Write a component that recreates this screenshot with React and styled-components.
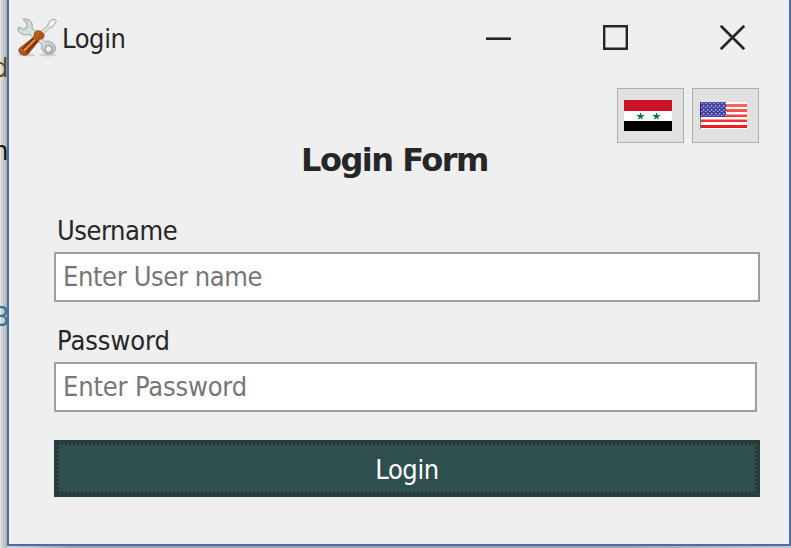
import React from "react";
import styled, { createGlobalStyle } from "styled-components";

const GlobalStyle = createGlobalStyle`
  * { box-sizing: border-box; }
  body { margin: 0; overflow: hidden; }
  button, input { font: inherit; letter-spacing: inherit; border-radius: 0; }
`;

const Desktop = styled.div`
  display: flex;
  width: 791px;
  height: 548px;
  overflow: hidden;
  background: linear-gradient(to right, #d8d8d8, #a6a4a5 70px, #a6a4a5 620px, #c4c4c4);
  color: #262626;
  font: 27px/32px "DejaVu Sans Condensed", "DejaVu Sans", sans-serif;
  font-stretch: condensed;
  letter-spacing: -0.4px;
`;

const Backdrop = styled.div`
  display: flex;
  flex-direction: column;
  align-items: flex-end;
  width: 7px;
  height: 548px;
  padding-top: 52px;
  overflow: hidden;
  background: linear-gradient(to right, #e5e5e5 0 1px, #d2d2d2 1px 3px, #c6c6c6 3px 5px, #b4b4b4 5px);
`;

const Fragment = styled.span`
  flex: none;
  height: 32px;
  margin-bottom: ${(p) => p.$gap}px;
  margin-right: ${(p) => p.$cut}px;
  color: ${(p) => p.$color};
`;

const Window = styled.main`
  display: flex;
  flex-direction: column;
  width: 784px;
  height: 546px;
  border: solid #4a6ea3;
  border-width: 0 2px 2px;
  background: #efefef;
`;

const TitleBar = styled.header`
  display: flex;
  align-items: center;
  height: 76px;
  padding-left: 8px;
`;

const Caption = styled.span`
  flex: 1;
  padding: 2px 0 0 4px;
`;

const WindowButton = styled.button`
  display: grid;
  place-items: center;
  width: 117px;
  height: 76px;
  padding: 0 0 2px 4px;
  border: 0;
  background: none;
  color: inherit;
`;

const Languages = styled.div`
  display: flex;
  justify-content: flex-end;
  gap: 8px;
  padding: 12px 30px 0 0;
`;

const FlagButton = styled.button`
  display: grid;
  place-items: start;
  width: 67px;
  height: 55px;
  padding: 11px 0 0 6px;
  border: 1px solid #adadad;
  background: #e1e1e1;
`;

const Heading = styled.h1`
  height: 40px;
  margin: -3px 0 0;
  padding-right: 9px;
  font-family: "DejaVu Sans", sans-serif;
  font-stretch: normal;
  font-size: 32px;
  line-height: 40px;
  font-weight: bold;
  letter-spacing: -1.5px;
  text-align: center;
`;

const Form = styled.form`
  display: flex;
  flex-direction: column;
  width: 706px;
  margin: 35px 0 0 45px;
`;

const Label = styled.label`
  height: 37px;
  padding-left: 3px;
  letter-spacing: ${(p) => p.$tracking}px;
`;

const Input = styled.input`
  width: ${(p) => p.$width}px;
  height: 50px;
  margin-bottom: ${(p) => p.$gap}px;
  padding: 0 7px 2px;
  border: 2px solid #a0a0a0;
  outline: none;
  background: #fff;
  letter-spacing: ${(p) => p.$tracking}px;
  &::placeholder { color: #767676; opacity: 1; }
`;

const Submit = styled.button`
  height: 57px;
  padding: 3px;
  border: 0;
  background: #243d3d;
  color: #fff;
`;

const FocusFrame = styled.span`
  display: flex;
  align-items: center;
  justify-content: center;
  height: 51px;
  padding-top: 2px;
  --dash: #2a2d2e 0 2px, #2f4f4f 2px 4px;
  background:
    repeating-linear-gradient(90deg, var(--dash)) 0 0 / 100% 2px no-repeat,
    repeating-linear-gradient(90deg, var(--dash)) 0 100% / 100% 2px no-repeat,
    repeating-linear-gradient(var(--dash)) 0 0 / 2px 100% no-repeat,
    repeating-linear-gradient(var(--dash)) 100% 0 / 2px 100% no-repeat,
    #2f4f4f;
`;

function ToolsIcon() {
  return (
    <svg width="41" height="40" viewBox="0 0 41 40">
      <defs>
        <linearGradient id="wood" x1="0" y1="0" x2="1" y2="1">
          <stop offset="0" stopColor="#e28b4a" />
          <stop offset="0.5" stopColor="#b95617" />
          <stop offset="1" stopColor="#74300c" />
        </linearGradient>
        <linearGradient id="steel" x1="0" y1="0" x2="1" y2="1">
          <stop offset="0" stopColor="#c0cdca" />
          <stop offset="0.5" stopColor="#e2e9e7" />
          <stop offset="1" stopColor="#b1bfbc" />
        </linearGradient>
      </defs>
      <ellipse cx="9" cy="37" rx="9" ry="1.5" fill="#cfcfcf" />
      <ellipse cx="31" cy="37" rx="9" ry="1.5" fill="#cfcfcf" />
      <path
        d="M6 1.2C11 0 15.500 3 15.200 8l-.3 2L28 23.500c5-1.300 10.500 2 10.500 7-.2 5.500-7 7.500-11 4.200-2.800-2.300-3.200-5.200-2.700-8.200L12 16C7 18.500 1 15.500.8 9.800l2.400-.6 2.800 2.200 3.800-1.400.2-4z"
        fill="url(#steel)" stroke="#97a5a2"
      />
      <circle cx="31.500" cy="31" r="3.400" fill="#efefef" stroke="#93a29e" strokeWidth="1.300" />
      <path d="M22 15L30.500 8c.8-3.800 3-6.300 6.800-6.800 1.700 0 2.400 1.300 1.500 3-1.500 3.300-3.500 5.300-6.500 6.100L24.500 18z" fill="#dde8e6" stroke="#9baaa6" />
      <path d="M33.500 7l3.500-3.500" stroke="#fff" strokeWidth="2" />
      <path d="M17.500 16c0-3 3.500-4 5.700-2.700 2.500 1 4.800 3.500 3.500 5.800-1 1.600-2.700 1.700-4 2.400L11 36C7.500 39.500-.5 34.500 2.500 30.500L17 19z" fill="url(#wood)" stroke="#903f0d" />
      <path d="M5.500 31L16.500 20.500M9.500 34.500L20.500 22.500" fill="none" stroke="#6e2c09" strokeWidth="1.300" />
      <path d="M7 32.500L18 21.500" stroke="#eda064" strokeWidth="1.300" />
    </svg>
  );
}

const starPath = "M0-4L1-1.200L4-1.200L1.600.6L2.500 3.500L0 1.700L-2.500 3.500L-1.600.6L-4-1.200L-1-1.200Z";

function SyrianFlag() {
  return (
    <svg width="48" height="31" viewBox="0 0 48 31">
      <path fill="#fff" d="M0 0h48v31H0z" />
      <path fill="#ce1126" d="M0 0h48v11H0z" />
      <path fill="#000" d="M0 21h48v10H0z" />
      <path fill="#007a3d" transform="translate(16.500 16.300)" d={starPath} />
      <path fill="#007a3d" transform="translate(32.500 16.300)" d={starPath} />
    </svg>
  );
}

function AmericanFlag() {
  return (
    <svg width="48" height="31" viewBox="0 0 48 31">
      <defs>
        <linearGradient id="stripe" x2="0" y2="1">
          <stop offset="0" stopColor="#ff6662" />
          <stop offset="1" stopColor="#eb1717" />
        </linearGradient>
        <pattern id="stars" width="4" height="4" patternUnits="userSpaceOnUse">
          <path fill="#4141a3" d="M0 0h4v4H0z" />
          <path fill="#b8b8dc" d="M0 1h1.300v1.500H0zM2 3h1.300v1H2z" />
        </pattern>
      </defs>
      <path fill="#fff" d="M1 2h47v27H1z" />
      <path fill="url(#stripe)" d="M1 4h47v3H1zM1 9h47v3H1zM1 14.500h47v2.500H1zM1 19.500h47v2.500H1zM1 25h47v3H1z" />
      <path fill="url(#stars)" d="M1 2h26v15H1z" />
      <path fill="#202060" d="M1 2h1v15H1z" />
      <path fill="#777" d="M1 17h1v12H1z" />
    </svg>
  );
}

export default function App() {
  return (
    <Desktop>
      <GlobalStyle />
      <Backdrop>
        <Fragment $color="#5d461e" $gap={51} $cut={-1}>d</Fragment>
        <Fragment $color="#111" $gap={134} $cut={-1}>m</Fragment>
        <Fragment $color="#297c94" $gap={0} $cut={-2}>B</Fragment>
      </Backdrop>
      <Window>
        <TitleBar>
          <ToolsIcon />
          <Caption>Login</Caption>
          <WindowButton aria-label="Minimize">
            <svg width="25" height="25"><path d="M0 13.700h25" stroke="#262626" strokeWidth="2.600" /></svg>
          </WindowButton>
          <WindowButton aria-label="Maximize">
            <svg width="25" height="25"><path d="M1.200 1.200h22.600v22.600H1.200z" fill="none" stroke="#262626" strokeWidth="2.400" /></svg>
          </WindowButton>
          <WindowButton aria-label="Close">
            <svg width="25" height="25"><path d="M.8.8l23.400 23.400M24.200.8L.8 24.200" stroke="#262626" strokeWidth="2.700" /></svg>
          </WindowButton>
        </TitleBar>
        <Languages>
          <FlagButton aria-label="Arabic"><SyrianFlag /></FlagButton>
          <FlagButton aria-label="English"><AmericanFlag /></FlagButton>
        </Languages>
        <Heading>Login Form</Heading>
        <Form onSubmit={(e) => e.preventDefault()}>
          <Label htmlFor="username" $tracking={-0.45}>Username</Label>
          <Input id="username" placeholder="Enter User name" $width={706} $gap={23} $tracking={-0.38} />
          <Label htmlFor="password" $tracking={-0.05}>Password</Label>
          <Input id="password" type="password" placeholder="Enter Password" $width={703} $gap={28} $tracking={-0.16} />
          <Submit type="submit"><FocusFrame>Login</FocusFrame></Submit>
        </Form>
      </Window>
    </Desktop>
  );
}
